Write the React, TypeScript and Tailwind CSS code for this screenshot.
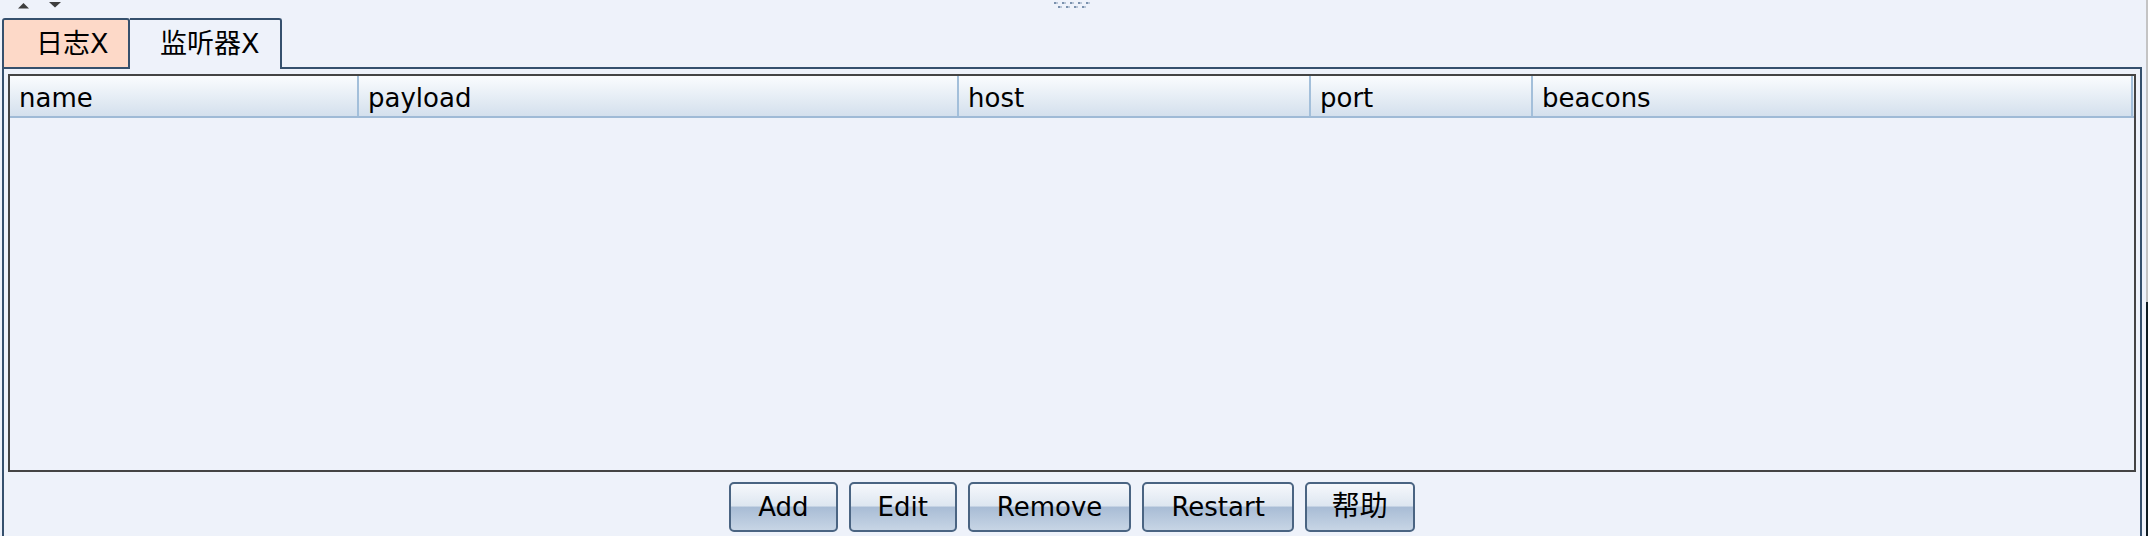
import React from 'react';

const columns = [
  { label: 'name', width: 'w-[349px]' },
  { label: 'payload', width: 'w-[600px]' },
  { label: 'host', width: 'w-[352px]' },
  { label: 'port', width: 'w-[222px]' },
  { label: 'beacons', width: 'w-[600px]' },
];

const actions = [
  { label: 'Add', size: 'text-[26px] px-[27px]' },
  { label: 'Edit', size: 'text-[26px] px-[27px]' },
  { label: 'Remove', size: 'text-[26px] px-[27px]' },
  { label: 'Restart', size: 'text-[26px] px-[27px]' },
  { label: '帮助', size: 'text-[28px] px-[25px]' },
];

function SplitterGrip() {
  const top = [0, 8, 16, 24, 32];
  const bottom = [4, 12, 20, 28];
  return (
    <svg width="38" height="8" viewBox="0 0 38 8" className="mt-[2px]">
      {top.map((x) => (
        <g key={`t${x}`}>
          <rect x={x} y={0} width={2} height={2} fill="#7a91ad" />
          <rect x={x + 2} y={0} width={2} height={2} fill="#b9c6d7" />
        </g>
      ))}
      {bottom.map((x) => (
        <g key={`b${x}`}>
          <rect x={x} y={4} width={2} height={2} fill="#7a91ad" />
          <rect x={x + 2} y={4} width={2} height={2} fill="#b9c6d7" />
        </g>
      ))}
    </svg>
  );
}

function ActionButton({ label, size }: { label: string; size: string }) {
  return (
    <button
      type="button"
      className={`${size} flex h-[50px] items-center rounded-[5px] border-2 border-[#4a6482] bg-[linear-gradient(to_bottom,#f6f8fc_0%,#dde6f0_48%,#a8bcd5_50%,#c7d5e5_100%)] leading-none text-black`}
    >
      {label}
    </button>
  );
}

export default function App() {
  return (
    <div className="flex h-[536px] w-[2148px] overflow-hidden bg-[#eef2fa] font-['DejaVu_Sans','Noto_Sans_CJK_SC',sans-serif] text-[26px] text-black">
      <div className="flex min-w-0 flex-1 flex-col">
        {/* split pane arrows + grip */}
        <div className="grid h-[18px] grid-cols-[1fr_auto_1fr]">
          <div className="flex items-start gap-[20px] pl-[18px] pt-[2px]">
            <svg width="11" height="6" viewBox="0 0 11 6" className="mt-[1px]">
              <path d="M5.5 0 L11 5.5 L0 5.5 Z" fill="#3d3d3d" />
            </svg>
            <svg width="12" height="6" viewBox="0 0 12 6">
              <path d="M0 0 L12 0 L6 5.5 Z" fill="#3d3d3d" />
            </svg>
          </div>
          <SplitterGrip />
          <div />
        </div>

        {/* tabs */}
        <div className="flex h-[49px] items-end pl-[2px] text-[27px]">
          <div className="flex h-[49px] w-[128px] items-center rounded-t-[3px] border-2 border-b-0 border-[#35506d] bg-[#fdd9c8] pl-[32px] pt-[1px]">
            日志X
          </div>
          <div className="relative z-10 -mb-[2px] flex h-[51px] w-[152px] items-center rounded-tr-[3px] border-t-2 border-r-2 border-[#35506d] bg-[#eef2fa] pb-[1px] pl-[30px]">
            监听器X
          </div>
        </div>

        {/* tab panel */}
        <div className="ml-[2px] mr-[4px] flex flex-1 flex-col border-2 border-b-0 border-[#35506d] px-[4px] pt-[5px]">
          <div className="flex h-[398px] flex-col border-2 border-[#444444] bg-[#eef2fa]">
            <div className="flex h-[42px] border-b-2 border-[#9fbad6] bg-linear-to-b from-[#fafcfe] to-[#d4e0ed]">
              {columns.map((col) => (
                <div
                  key={col.label}
                  className={`${col.width} flex items-center border-r-2 border-[#a3bfda] pl-[9px] pt-[4px]`}
                >
                  {col.label}
                </div>
              ))}
            </div>
            <div className="flex-1" />
          </div>

          <div className="mt-[10px] flex justify-center gap-[11px]">
            {actions.map((a) => (
              <ActionButton key={a.label} label={a.label} size={a.size} />
            ))}
          </div>
        </div>
      </div>

      {/* neighbouring window edge */}
      <div className="flex w-[2px] flex-col">
        <div className="h-[302px] bg-[#c4c4c4]" />
        <div className="flex-1 bg-[#0e1b21]" />
      </div>
    </div>
  );
}
